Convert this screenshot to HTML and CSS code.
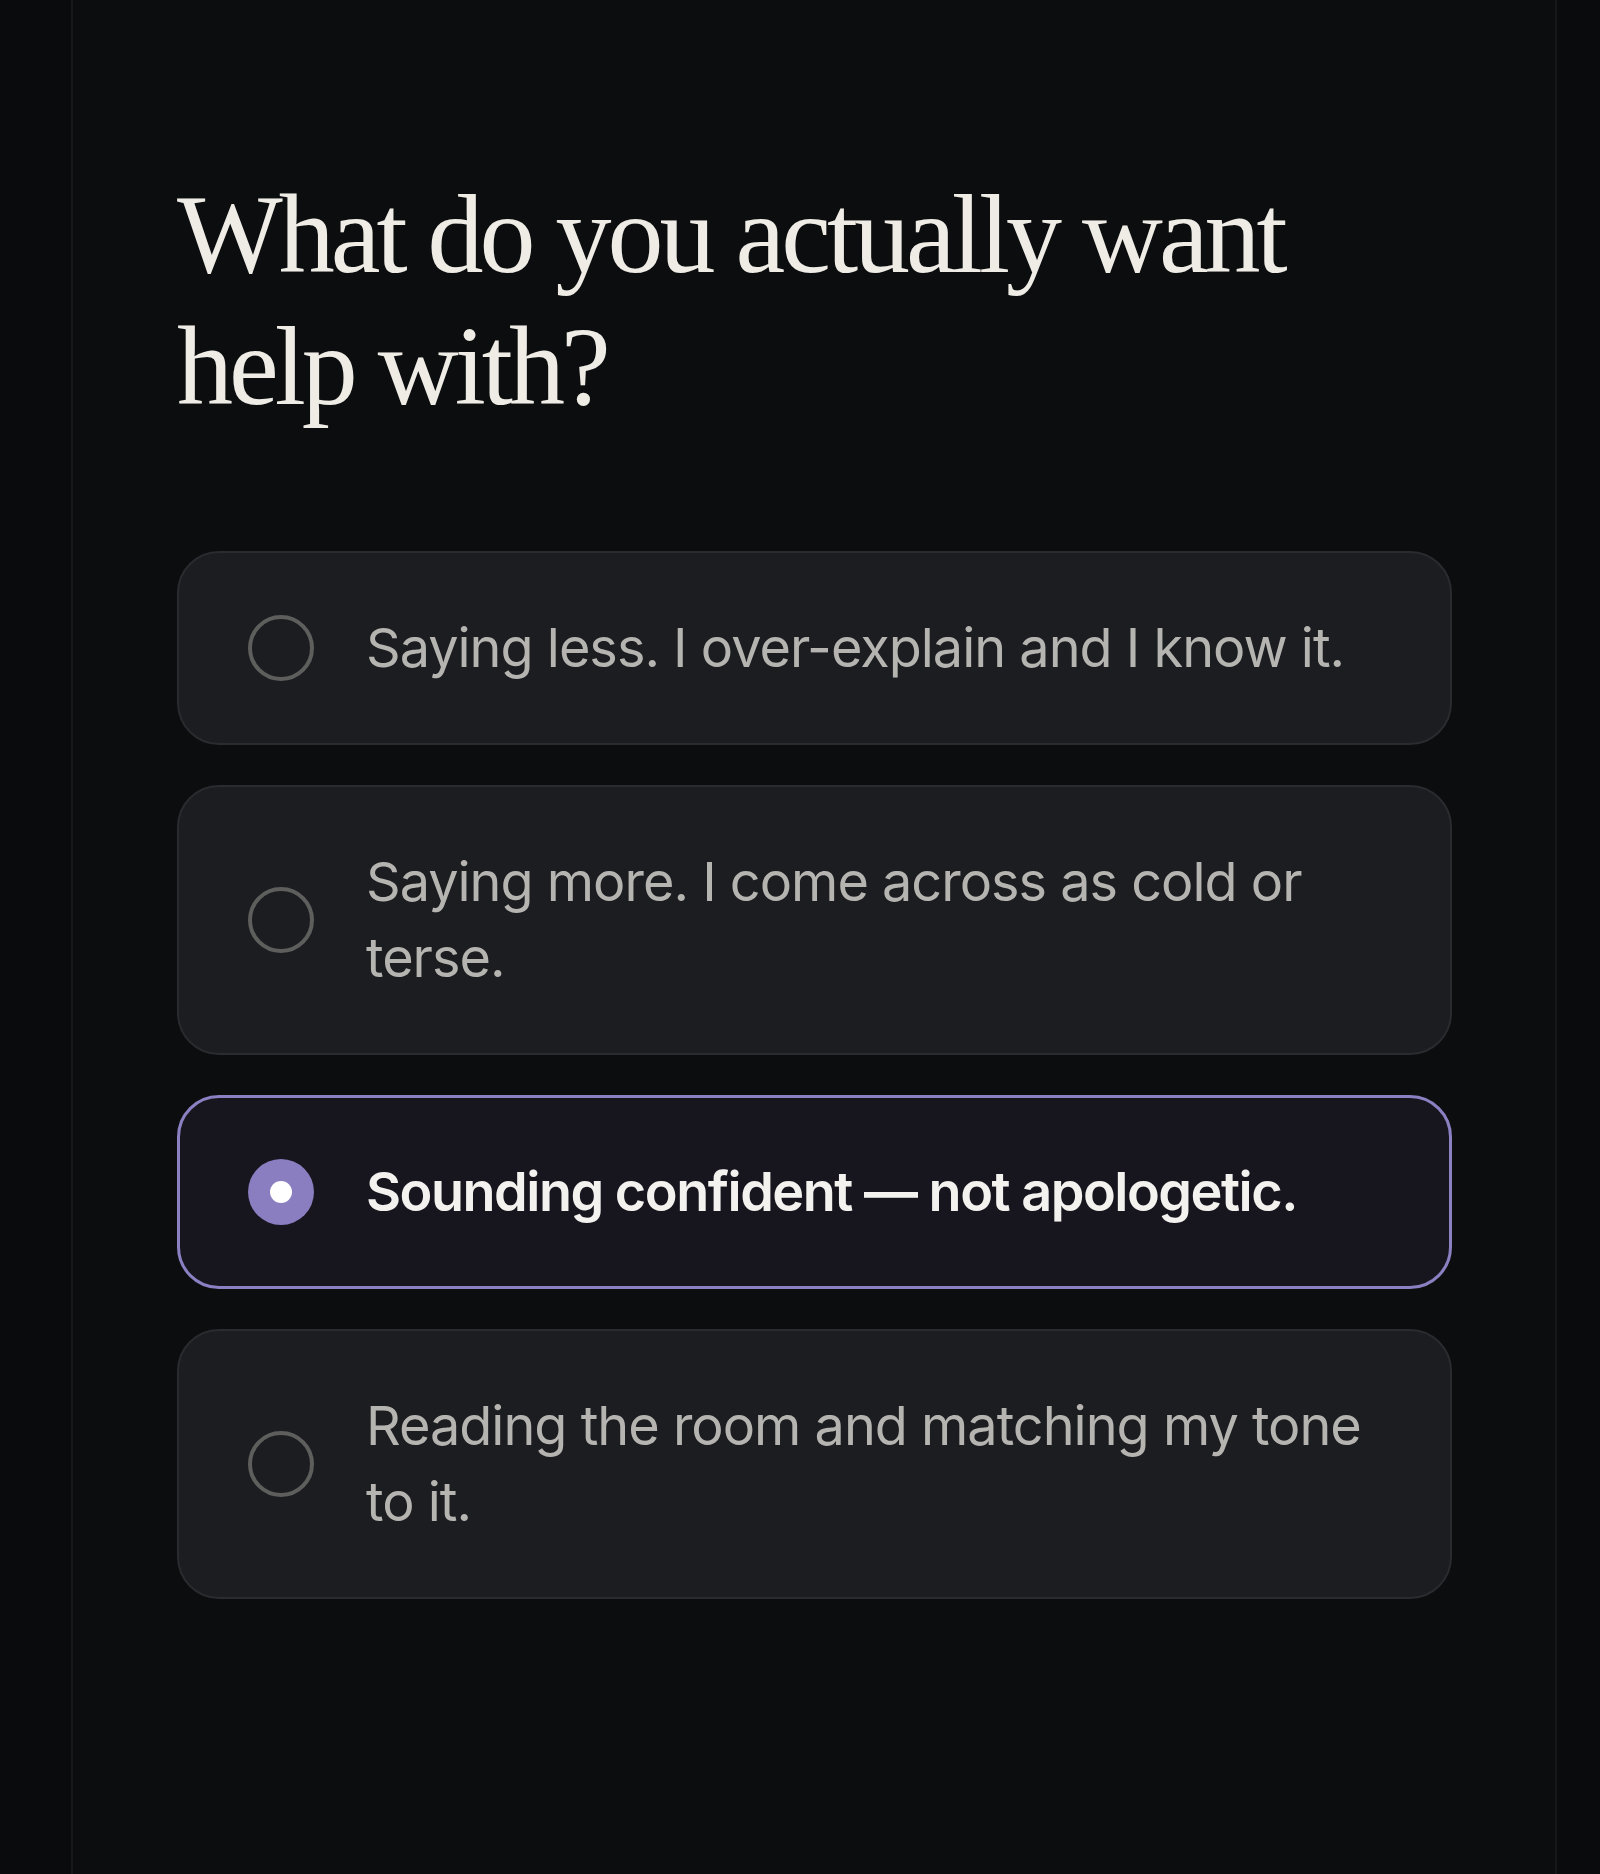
FILE: index.html
```html
<!DOCTYPE html>
<html lang="en">
<head>
    <meta charset="UTF-8">
    <meta name="viewport" content="width=device-width, initial-scale=1.0">
    <title>What do you actually want help with?</title>
    <link rel="stylesheet" href="styles.css">
</head>
<body>
    <div class="panel">
        <h1 class="question">What do you actually want help with?</h1>
        <div class="options">
            <div class="option">
                <span class="radio"></span>
                <span class="label">Saying less. I over-explain and I know it.</span>
            </div>
            <div class="option">
                <span class="radio"></span>
                <span class="label">Saying more. I come across as cold or terse.</span>
            </div>
            <div class="option selected">
                <span class="radio"></span>
                <span class="label">Sounding confident — not apologetic.</span>
            </div>
            <div class="option">
                <span class="radio"></span>
                <span class="label">Reading the room and matching my tone to it.</span>
            </div>
        </div>
    </div>
</body>
</html>
```

FILE: styles.css
```css
body {
    margin: 0;
    background-color: #0a0b0d;
    font-family: Inter, "Noto Sans", sans-serif;
}

.panel {
    box-sizing: border-box;
    width: 1486px;
    min-height: 100vh;
    margin-left: 71px;
    padding: 168px 103px 0 104px;
    background-color: #0c0d0f;
    border-left: 2px solid #17181b;
    border-right: 2px solid #17181b;
}

.question {
    margin: 0 0 119px;
    max-width: 1180px;
    font-family: "Liberation Serif", "DejaVu Serif", serif;
    font-weight: 400;
    font-size: 112px;
    line-height: 132px;
    letter-spacing: -4px;
    color: #efece6;
}

.options {
    display: flex;
    flex-direction: column;
    gap: 40px;
}

.option {
    display: flex;
    align-items: center;
    gap: 52px;
    padding: 57px 68px 57px 69px;
    background-color: #1c1d21;
    border: 2px solid #2a2b2f;
    border-radius: 42px;
    cursor: pointer;
}

.radio {
    flex: none;
    box-sizing: border-box;
    width: 66px;
    height: 66px;
    border: 4px solid #5e5e5c;
    border-radius: 50%;
    display: flex;
    justify-content: center;
    align-items: center;
}

.label {
    font-size: 54px;
    line-height: 76px;
    letter-spacing: -1px;
    color: #b5b4b0;
}

.option.selected {
    background-color: #17161f;
    border: 3px solid #8b80c2;
    padding: 56px 67px 56px 68px;
}

.option.selected .radio {
    border: none;
    background-color: #8a7ec0;
}

.option.selected .radio::after {
    content: "";
    width: 22px;
    height: 22px;
    border-radius: 50%;
    background-color: #fff;
}

.option.selected .label {
    font-weight: 600;
    letter-spacing: -1.5px;
    color: #f4f2ee;
}
```
